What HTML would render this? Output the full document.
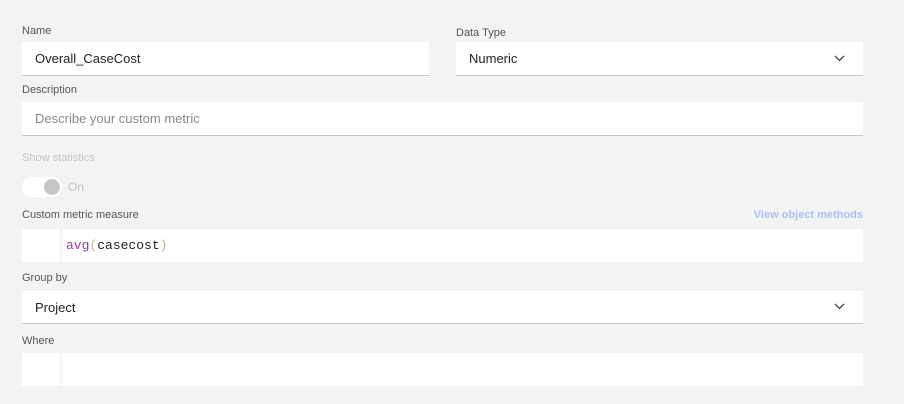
<!DOCTYPE html>
<html><head><meta charset="utf-8"><style>
*{box-sizing:border-box;margin:0;padding:0}
body{width:904px;height:404px;background:#f3f3f3;font-family:"Liberation Sans",sans-serif;position:relative;overflow:hidden}
.l{position:absolute;font-size:11px;color:#555}
.f{position:absolute;background:#fff;font-size:13px;color:#222;display:flex;align-items:center;padding-left:13px}
.u{border-bottom:1px solid #c6c6c6}
.chev{position:absolute;right:18px;top:50%;margin-top:-4px}
.code{position:absolute;background:#fff;left:22px;width:841px;display:flex}
.g{width:40px;border-right:2px solid #f3f3f3;height:100%}
.c{font-family:"Liberation Mono",monospace;font-size:13px;padding-left:4px;display:flex;align-items:center;color:#222}
</style></head><body>
<div class="l" style="left:22px;top:25px">Name</div>
<div class="f u" style="left:22px;top:42px;width:407px;height:34px">Overall_CaseCost</div>
<div class="l" style="left:456px;top:27px">Data Type</div>
<div class="f u" style="left:456px;top:42px;width:407px;height:34px">Numeric<svg class="chev" width="11" height="7" viewBox="0 0 11 7"><path d="M1 1l4.5 4.5L10 1" fill="none" stroke="#444" stroke-width="1.3"/></svg></div>
<div class="l" style="left:22px;top:84px">Description</div>
<div class="f u" style="left:22px;top:102px;width:841px;height:34px;color:#888">Describe your custom metric</div>
<div class="l" style="left:22px;top:152px;color:#c4c4c4">Show statistics</div>
<div style="position:absolute;left:22px;top:177px;width:40px;height:20px;border-radius:10px;background:#fff"></div>
<div style="position:absolute;left:44px;top:179px;width:16px;height:16px;border-radius:8px;background:#c6c6c6"></div>
<div class="l" style="left:68px;top:180px;color:#c4c4c4;font-size:12px">On</div>
<div class="l" style="left:22px;top:209px">Custom metric measure</div>
<div class="l" style="right:41px;top:209px;color:#a8c0f8;font-weight:bold">View object methods</div>
<div class="code" style="top:229px;height:33px"><div class="g"></div><div class="c"><span style="color:#a035a8">avg</span><span style="color:#b8b890">(</span>casecost<span style="color:#b8b890">)</span></div></div>
<div class="l" style="left:22px;top:272px">Group by</div>
<div class="f u" style="left:22px;top:291px;width:841px;height:33px">Project<svg class="chev" width="11" height="7" viewBox="0 0 11 7"><path d="M1 1l4.5 4.5L10 1" fill="none" stroke="#444" stroke-width="1.3"/></svg></div>
<div class="l" style="left:22px;top:335px">Where</div>
<div class="code" style="top:353px;height:33px"><div class="g"></div></div>
</body></html>
